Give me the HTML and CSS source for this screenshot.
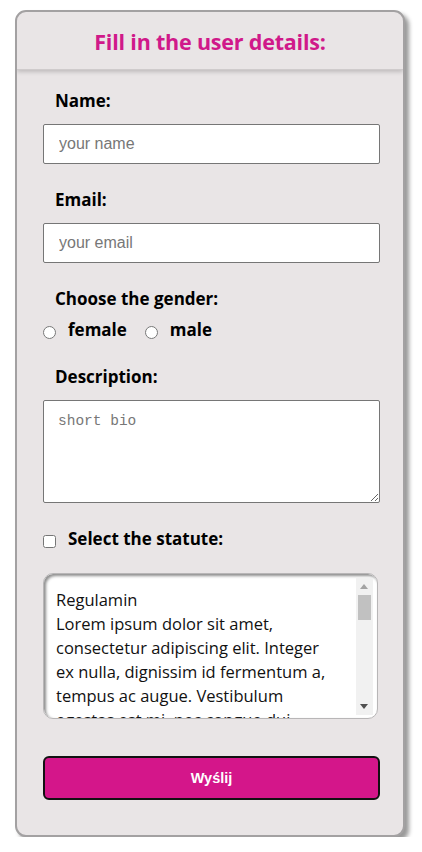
FILE: index.html
```html
<!DOCTYPE html>
<html lang="pl">
<head>
<meta charset="utf-8">
<title>Form</title>
<link rel="stylesheet" href="styles.css">
</head>
<body>
<form class="card">
  <div class="card-header">
    <h1 class="title">Fill in the user details:</h1>
  </div>
  <div class="card-body">
    <div class="field">
      <label class="label" for="name">Name:</label>
      <input class="text-input" id="name" type="text" placeholder="your name">
    </div>
    <div class="field">
      <label class="label" for="email">Email:</label>
      <input class="text-input" id="email" type="email" placeholder="your email">
    </div>
    <div class="field">
      <span class="label">Choose the gender:</span>
      <div class="radios">
        <label class="choice"><input type="radio" name="g" class="radio"> female</label>
        <label class="choice"><input type="radio" name="g" class="radio"> male</label>
      </div>
    </div>
    <div class="field">
      <label class="label" for="desc">Description:</label>
      <textarea class="textarea" id="desc" placeholder="short bio"></textarea>
    </div>
    <label class="choice statute-check"><input type="checkbox" class="checkbox"> Select the statute:</label>
    <div class="statute">
      <div class="statute-text">Regulamin<br>Lorem ipsum dolor sit amet,<br>consectetur adipiscing elit. Integer<br>ex nulla, dignissim id fermentum a,<br>tempus ac augue. Vestibulum<br>egestas est mi, nec congue dui.</div>
      <div class="scrollbar">
        <span class="arrow up"></span>
        <span class="thumb"></span>
        <span class="track"></span>
        <span class="arrow down"></span>
      </div>
    </div>
    <button type="button" class="submit">Wyślij</button>
  </div>
</form>
</body>
</html>
```
FILE: styles.css
```css
html, body {
  margin: 0;
  padding: 0;
  background: #ffffff;
}
body {
  padding: 10px 0 0 15px;
  font-family: "Open Sans", "Noto Sans", sans-serif;
}
.card {
  width: 390px;
  box-sizing: border-box;
  background: #e9e5e6;
  border: 2px solid #a3a1a2;
  border-radius: 11px;
  box-shadow: 4px 4px 4px rgba(0,0,0,0.4);
  overflow: hidden;
}
.card-header {
  height: 57px;
  display: flex;
  align-items: center;
  justify-content: center;
  border-bottom: 1px solid #cfcbcc;
  box-shadow: 0 2px 4px rgba(0,0,0,0.18);
}
.title {
  margin: 0 0 -2px 0;
  font-size: 21.5px;
  font-weight: 700;
  color: #d0198a;
  letter-spacing: -0.2px;
}
.card-body {
  padding: 20px 23px 35px 26px;
  display: flex;
  flex-direction: column;
}
.field {
  display: flex;
  flex-direction: column;
  margin-bottom: 25px;
}
.label {
  font-size: 17px;
  font-weight: 700;
  line-height: 22px;
  color: #000;
  margin-left: 12px;
  margin-bottom: 12px;
}
.text-input {
  box-sizing: border-box;
  height: 40px;
  width: 100%;
  margin: 0;
  border: 1px solid #767676;
  border-radius: 2px;
  background: #fff;
  padding: 0 15px;
  font-family: "Liberation Sans", Arial, sans-serif;
  font-size: 16px;
}
.text-input::placeholder {
  color: #777;
}
.radios {
  display: flex;
  gap: 18px;
  margin-top: -3px;
}
.choice {
  display: flex;
  align-items: center;
  font-size: 17px;
  font-weight: 700;
  line-height: 22px;
  gap: 12px;
}
.radio, .checkbox {
  margin: 4px 0 0 0;
  width: 13px;
  height: 13px;
}
.textarea {
  box-sizing: border-box;
  width: 100%;
  height: 103px;
  margin: 0;
  border: 1px solid #767676;
  border-radius: 2px;
  background: #fff;
  padding: 12px 14px;
  font-family: "Liberation Mono", monospace;
  font-size: 14.5px;
  resize: vertical;
}
.textarea::placeholder {
  color: #777;
}
.statute-check {
  margin-bottom: 23px;
}
.statute {
  display: flex;
  height: 146px;
  box-sizing: border-box;
  width: 335px;
  background: #fff;
  border: 1px solid #b8b6b7;
  border-radius: 10px;
  box-shadow: inset 2px 2px 3px rgba(0,0,0,0.45);
  overflow: hidden;
  padding: 4px 4px 0 12px;
}
.statute-text {
  flex: 1;
  overflow: hidden;
  padding: 10px 8px 0 0;
  font-size: 16.5px;
  line-height: 24px;
  color: #111;
  white-space: nowrap;
}
.scrollbar {
  width: 17px;
  margin-bottom: 3px;
  display: flex;
  flex-direction: column;
  align-items: stretch;
  background: #f1f1f1;
}
.arrow {
  height: 17px;
  position: relative;
}
.arrow::after {
  content: "";
  position: absolute;
  left: 4px;
  border-left: 4px solid transparent;
  border-right: 4px solid transparent;
}
.arrow.up::after {
  top: 6px;
  border-bottom: 5px solid #a3a3a3;
}
.arrow.down::after {
  top: 6px;
  border-top: 5px solid #505050;
}
.thumb {
  height: 25px;
  margin: 0 2px;
  background: #c1c1c1;
}
.track {
  flex: 1;
}
.submit {
  margin-top: 37px;
  height: 44px;
  width: 100%;
  border: 2px solid #111;
  border-radius: 6px;
  background: #d4168a;
  color: #fff;
  font-family: "Liberation Sans", Arial, sans-serif;
  font-weight: 700;
  font-size: 14.5px;
}
```
